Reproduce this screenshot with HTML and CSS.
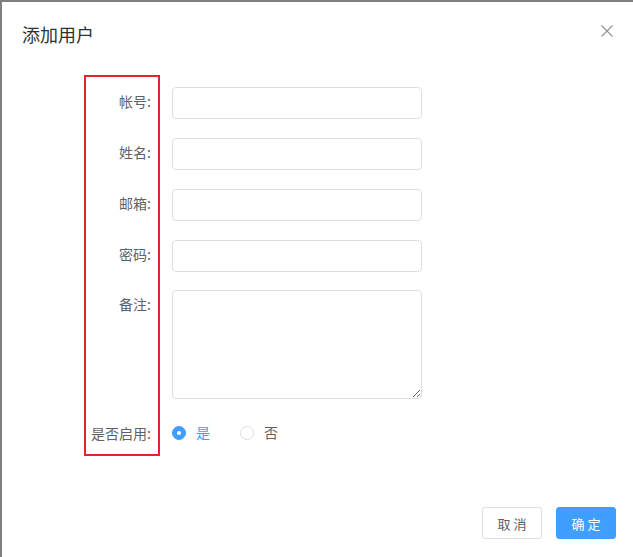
FILE: index.html
```html
<!DOCTYPE html>
<html lang="zh-CN">
<head>
<meta charset="utf-8">
<title>添加用户</title>
<link rel="stylesheet" href="styles.css">
</head>
<body>
<div class="dialog">
  <div class="dialog-header">
    <span class="dialog-title">添加用户</span>
    <button class="dialog-close" aria-label="关闭">
      <svg width="12" height="12" viewBox="0 0 12 12"><path d="M0.5 0.5L11.5 11.5M11.5 0.5L0.5 11.5" stroke="#909399" stroke-width="1.2" fill="none"/></svg>
    </button>
  </div>
  <div class="dialog-body">
    <form class="form">
      <div class="annot"></div>
      <div class="form-item">
        <label class="form-label">帐号:</label>
        <input class="input" type="text">
      </div>
      <div class="form-item">
        <label class="form-label">姓名:</label>
        <input class="input" type="text">
      </div>
      <div class="form-item">
        <label class="form-label">邮箱:</label>
        <input class="input" type="text">
      </div>
      <div class="form-item tight">
        <label class="form-label">密码:</label>
        <input class="input" type="password">
      </div>
      <div class="form-item tight">
        <label class="form-label">备注:</label>
        <textarea class="textarea"></textarea>
      </div>
      <div class="form-item last">
        <label class="form-label">是否启用:</label>
        <div class="radio-group">
          <span class="radio checked"><span class="radio-inner"></span><span class="radio-label">是</span></span>
          <span class="radio"><span class="radio-inner"></span><span class="radio-label">否</span></span>
        </div>
      </div>
    </form>
  </div>
  <div class="dialog-footer">
    <button class="btn">取 消</button>
    <button class="btn btn-primary">确 定</button>
  </div>
</div>
</body>
</html>
```
FILE: styles.css
```css
html, body {
  margin: 0;
  padding: 0;
}
body {
  background: #7f7f7f;
  font-family: "Noto Sans CJK SC", "Noto Sans", sans-serif;
  overflow: hidden;
}
.dialog {
  margin: 2px 0 0 2px;
  width: 631px;
  height: 555px;
  background: #fff;
  display: flex;
  flex-direction: column;
  box-sizing: border-box;
}
.dialog-header {
  padding: 20px 20px 10px 20px;
  display: flex;
  align-items: center;
  justify-content: space-between;
}
.dialog-title {
  font-size: 18px;
  line-height: 24px;
  color: #303133;
}
.dialog-close {
  border: 0;
  background: none;
  padding: 0;
  width: 12px;
  height: 12px;
  display: flex;
  margin-top: -6px;
  cursor: pointer;
}
.dialog-body {
  padding: 19px 0 0 82px;
}
.form {
  position: relative;
  padding: 12px 0 7px;
  margin: 0;
}
.annot {
  position: absolute;
  left: 0;
  top: 0;
  bottom: 0;
  width: 76px;
  box-sizing: border-box;
  border: 2px solid #e5232b;
  pointer-events: none;
}
.form-item {
  display: flex;
  align-items: flex-start;
  margin-bottom: 19px;
}
.form-item.tight {
  margin-bottom: 18px;
}
.form-item.last {
  margin-bottom: 0;
  align-items: center;
}
.form-label {
  width: 76px;
  box-sizing: border-box;
  padding-right: 9px;
  text-align: right;
  font-size: 14px;
  line-height: 28px;
  color: #606266;
  flex: none;
  white-space: nowrap;
}
.input, .textarea {
  margin: 0 0 0 12px;
  width: 250px;
  box-sizing: border-box;
  border: 1px solid #dcdfe6;
  border-radius: 4px;
  background: #fff;
  font-family: inherit;
  font-size: 14px;
  color: #606266;
  outline: none;
}
.input {
  height: 32px;
  padding: 0 15px;
}
.textarea {
  height: 109px;
  padding: 5px 15px;
  resize: vertical;
  display: block;
}
.radio-group {
  margin-left: 12px;
  height: 32px;
  display: flex;
  align-items: center;
}
.radio {
  display: inline-flex;
  align-items: center;
  margin-right: 30px;
  font-size: 14px;
  color: #606266;
}
.radio-inner {
  width: 14px;
  height: 14px;
  box-sizing: border-box;
  border: 1px solid #dcdfe6;
  border-radius: 50%;
  background: #fff;
  position: relative;
}
.radio.checked .radio-inner {
  background: #409eff;
  border-color: #409eff;
}
.radio.checked .radio-inner::after {
  content: "";
  position: absolute;
  left: 50%;
  top: 50%;
  width: 4px;
  height: 4px;
  margin: -2px 0 0 -2px;
  border-radius: 50%;
  background: #fff;
}
.radio-label {
  margin-left: 10px;
  line-height: 14px;
  position: relative;
  top: -1px;
}
.radio.checked .radio-label {
  color: #409eff;
}
.dialog-footer {
  margin-top: auto;
  padding: 0 17px 18px 0;
  display: flex;
  justify-content: flex-end;
  gap: 14px;
}
.btn {
  width: 60px;
  height: 32px;
  padding: 0;
  box-sizing: border-box;
  border: 1px solid #dcdfe6;
  border-radius: 3px;
  background: #fff;
  color: #606266;
  font-family: inherit;
  font-size: 13px;
  cursor: pointer;
}
.btn-primary {
  background: #409eff;
  border-color: #409eff;
  color: #fff;
}
```
